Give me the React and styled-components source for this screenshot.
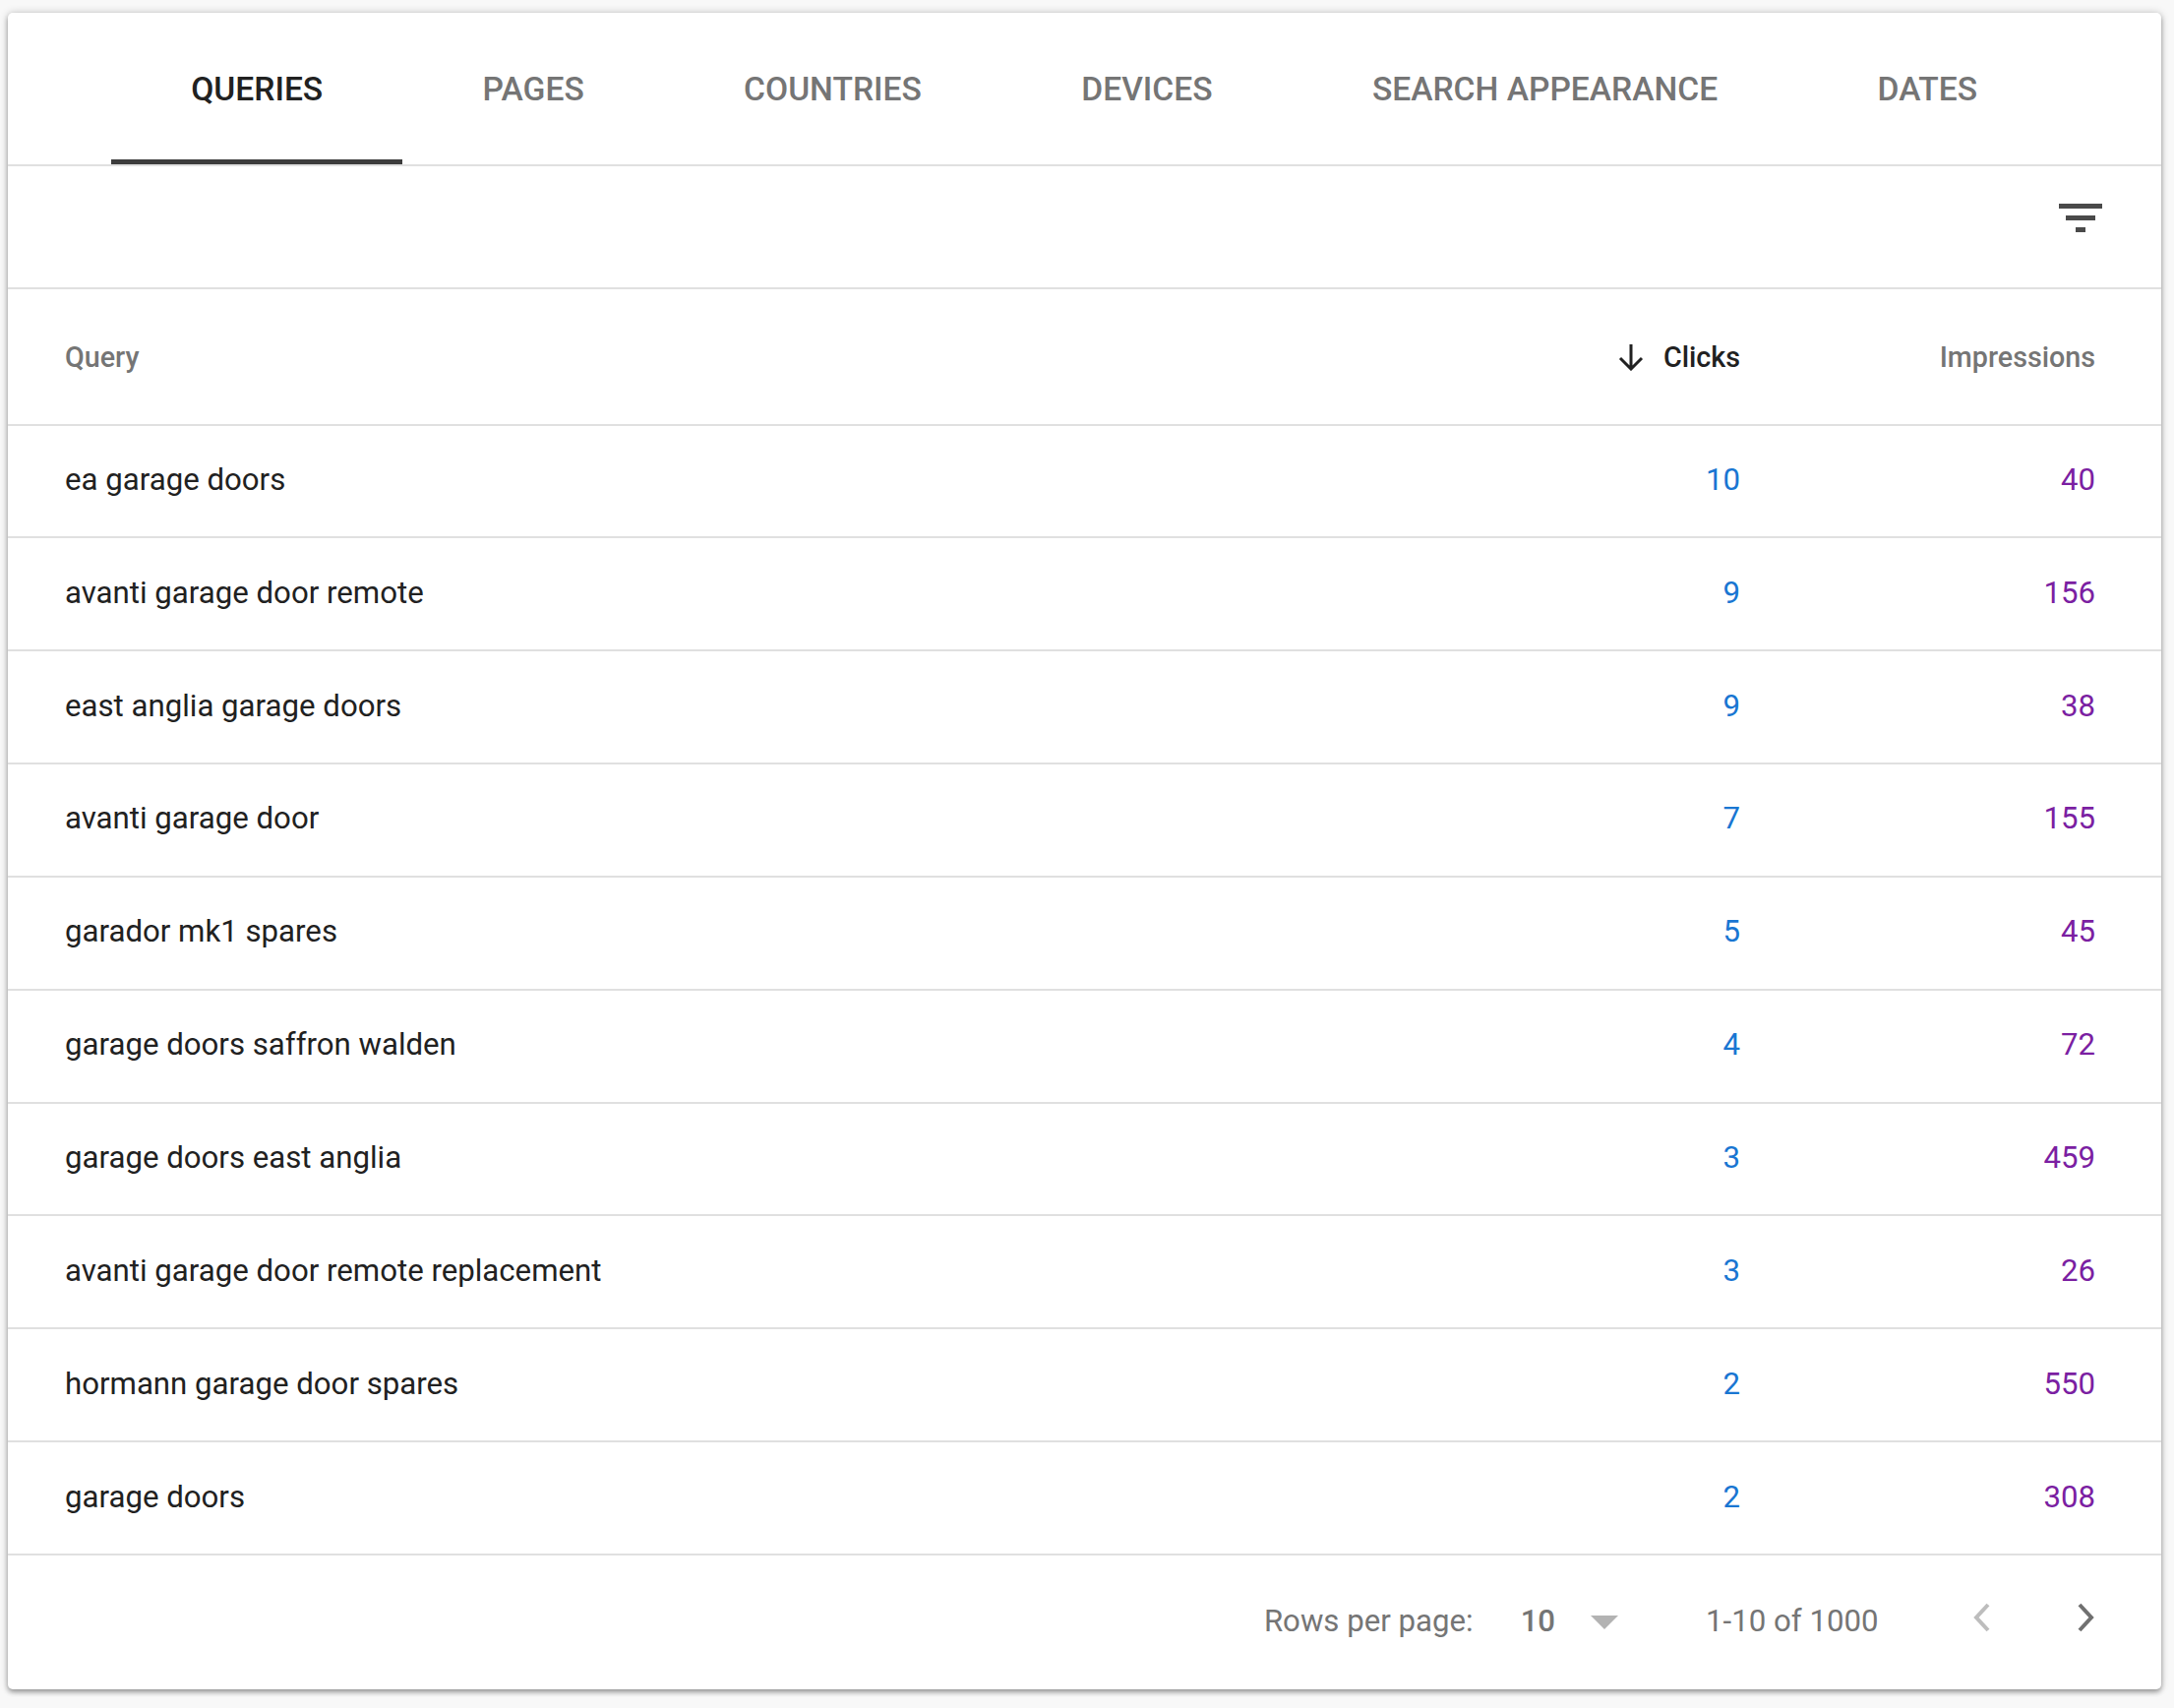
import React from "react";
import styled, { createGlobalStyle } from "styled-components";

const Global = createGlobalStyle`
  html, body { margin: 0; padding: 0; background: #f8f8f8; }
  body { font-family: Roboto, "Noto Sans", sans-serif; -webkit-font-smoothing: antialiased; }
`;
const Page = styled.div`
  width: 2210px; height: 1736px; padding: 13px 13px 19px 8px; box-sizing: border-box; overflow: hidden;
`;
const Card = styled.section`
  background: #fff; border-radius: 5px; height: 1704px;
  box-shadow: 0 3px 5px rgba(0,0,0,.32), 0 0 8px rgba(0,0,0,.2);
  display: flex; flex-direction: column; overflow: hidden;
`;
const Tabs = styled.nav`
  display: flex; height: 154px; padding-left: 105px; border-bottom: 2px solid #e0e0e0; flex: none;
`;
const Tab = styled.div`
  box-sizing: border-box; height: 154px; padding: 5px 81.2px 0; display: flex; align-items: center;
  font-size: 33.6px; font-weight: 500; letter-spacing: 0; white-space: nowrap;
  color: ${p => (p.$active ? "#212121" : "#757575")};
  border-bottom: 5px solid ${p => (p.$active ? "#3c3c3c" : "transparent")};
`;
const Toolbar = styled.div`
  height: 125px; flex: none; display: flex; justify-content: flex-end; align-items: flex-start;
  padding: 38px 60px 0 0; box-sizing: border-box; border-bottom: 2px solid #e0e0e0;
`;
const Row = styled.div`
  height: 114.85px; flex: none; box-sizing: border-box;
  display: flex; align-items: center; padding: 0 67px 3px 58px; border-bottom: 2px solid #e0e0e0;
`;
const HeadRow = styled(Row)`
  height: 138.5px; padding-top: 2px; padding-bottom: 0;
`;
const QueryCell = styled.div`
  flex: 1; font-size: 31.2px; color: #212121; white-space: nowrap;
`;
const Clicks = styled.div`
  width: 300px; text-align: right; font-size: 31.2px; color: #1976d2; flex: none;
`;
const Impr = styled.div`
  width: 361px; text-align: right; font-size: 31.2px; color: #7b1fa2; flex: none;
`;
const HeadQuery = styled.div`
  flex: 1; font-size: 28.7px; font-weight: 500; color: #757575;
`;
const HeadClicks = styled.div`
  width: 300px; flex: none; display: flex; justify-content: flex-end; align-items: center; gap: 19px;
  font-size: 28.7px; font-weight: 500; color: #212121;
`;
const HeadImpr = styled.div`
  width: 361px; flex: none; text-align: right; font-size: 28.7px; font-weight: 500; color: #757575;
`;
const Footer = styled.footer`
  flex: 1; display: flex; align-items: center; justify-content: flex-end;
  padding: 0 66px 2px 0; font-size: 31.2px; color: #757575;
`;
const Label = styled.span`margin-right: 48px;`;
const Size = styled.span`font-weight: 500; margin-right: 36px;`;
const Range = styled.span`margin: 0 94.5px 0 89px;`;
const Caret = styled.i`
  display: block; width: 0; height: 0; border-left: 14px solid transparent; border-right: 14px solid transparent;
  border-top: 14px solid #b3b3b3; margin-top: 2px;
`;
const PageBtn = styled.svg`
  width: 20px; height: 30px; display: block; margin-top: -7px; margin-left: ${p => p.$gap || 0}px;
`;

const rows = [
  ["ea garage doors", 10, 40],
  ["avanti garage door remote", 9, 156],
  ["east anglia garage doors", 9, 38],
  ["avanti garage door", 7, 155],
  ["garador mk1 spares", 5, 45],
  ["garage doors saffron walden", 4, 72],
  ["garage doors east anglia", 3, 459],
  ["avanti garage door remote replacement", 3, 26],
  ["hormann garage door spares", 2, 550],
  ["garage doors", 2, 308],
];
const tabs = ["QUERIES", "PAGES", "COUNTRIES", "DEVICES", "SEARCH APPEARANCE", "DATES"];

export default function App() {
  return (
    <Page>
      <Global />
      <Card>
        <Tabs>
          {tabs.map((t, i) => <Tab key={t} $active={i === 0}>{t}</Tab>)}
        </Tabs>
        <Toolbar>
          <svg width="44" height="30" viewBox="0 0 44 30" fill="#4a4a4a">
            <rect x="0" y="0" width="44" height="5" />
            <rect x="7" y="12" width="30" height="5" />
            <rect x="17" y="24" width="10" height="5" />
          </svg>
        </Toolbar>
        <HeadRow>
          <HeadQuery>Query</HeadQuery>
          <HeadClicks>
            <svg width="28" height="28" viewBox="0 0 28 28" fill="none" stroke="#212121" strokeWidth="3">
              <path d="M14 1v25M3 15l11 11 11-11" />
            </svg>
            Clicks
          </HeadClicks>
          <HeadImpr>Impressions</HeadImpr>
        </HeadRow>
        {rows.map(([q, c, i]) => (
          <Row key={q}>
            <QueryCell>{q}</QueryCell>
            <Clicks>{c}</Clicks>
            <Impr>{i}</Impr>
          </Row>
        ))}
        <Footer>
          <Label>Rows per page:</Label>
          <Size>10</Size>
          <Caret />
          <Range>1-10 of 1000</Range>
          <PageBtn viewBox="0 0 20 30" fill="none" stroke="#bdbdbd" strokeWidth="4"><path d="M17 2 5 15l12 13" /></PageBtn>
          <PageBtn $gap={87} viewBox="0 0 20 30" fill="none" stroke="#707070" strokeWidth="4"><path d="M3 2l12 13L3 28" /></PageBtn>
        </Footer>
      </Card>
    </Page>
  );
}
